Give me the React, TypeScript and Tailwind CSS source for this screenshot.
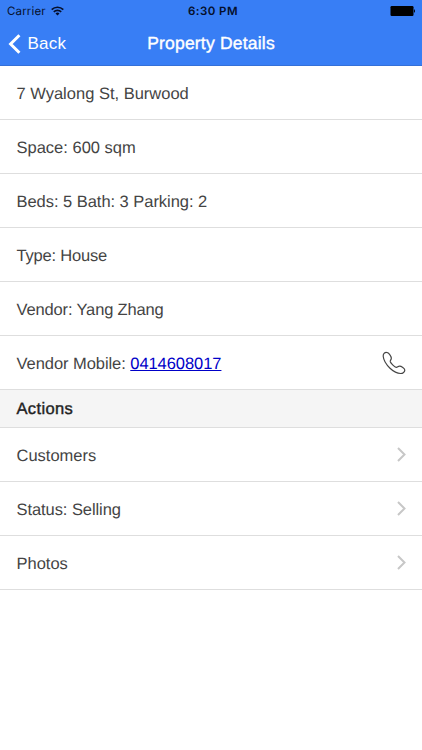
import React from 'react';

interface Property {
  address: string;
  space: number;
  beds: number;
  bath: number;
  parking: number;
  type: string;
  vendor: string;
  mobile: string;
  status: string;
}

const property: Property = {
  address: '7 Wyalong St, Burwood',
  space: 600,
  beds: 5,
  bath: 3,
  parking: 2,
  type: 'House',
  vendor: 'Yang Zhang',
  mobile: '0414608017',
  status: 'Selling',
};

function StatusBar() {
  return (
    <div className="grid h-[22px] grid-cols-3 items-center px-[7px] text-[#050f2b]">
      <div className="flex items-center gap-[5px] font-['Inter',sans-serif] text-[11.5px]">
        <span className="tracking-[0.15px]">Carrier</span>
        <svg width="13" height="10" viewBox="0 0 13 10" fill="none" stroke="currentColor" strokeWidth="1.7">
          <path d="M0.7 3.6a8.3 8.3 0 0 1 11.6 0" />
          <path d="M2.8 5.8a5.3 5.3 0 0 1 7.4 0" />
          <path d="M6.5 9.6 4.5 7.5a2.9 2.9 0 0 1 4 0z" fill="currentColor" stroke="none" />
        </svg>
      </div>
      <div className="pl-[4px] text-center font-['Inter',sans-serif] text-[11.5px] font-semibold tracking-[0.45px]">
        6:30 PM
      </div>
      <svg className="justify-self-end" width="25" height="10" viewBox="0 0 25 10" fill="#000">
        <rect x="0.5" y="0" width="23" height="10" rx="1.2" />
        <path d="M24 3.2c1.3.6 1.3 3 0 3.6z" />
      </svg>
    </div>
  );
}

function NavBar() {
  return (
    <div className="grid h-[43px] grid-cols-[1fr_auto_1fr] items-center text-white">
      <button className="flex items-center pl-[8px] text-[17px] tracking-[0.2px]">
        <svg width="13" height="20" viewBox="0 0 13 20" fill="none" stroke="currentColor" strokeWidth="3">
          <path d="M11.4 1.2 2.6 10l8.8 8.8" />
        </svg>
        <span className="ml-[6.5px]">Back</span>
      </button>
      <h1 className="-mt-[2px] text-[17.5px] tracking-[0.2px] [-webkit-text-stroke:0.4px]">Property Details</h1>
      <span />
    </div>
  );
}

interface RowProps {
  children: React.ReactNode;
  icon?: React.ReactNode;
  className?: string;
}

function Row({ children, icon, className = '' }: RowProps) {
  return (
    <li className="flex h-[54px] items-center justify-between border-b border-[#dedede] pl-[16.5px] pr-4 pt-px">
      <span className={`pt-[2px] ${className}`}>{children}</span>
      {icon}
    </li>
  );
}

function Chevron() {
  return (
    <svg className="-mt-[2px]" width="9" height="15" viewBox="0 0 9 15" fill="none" stroke="#c7c7c7" strokeWidth="2">
      <path d="M1 1l6.5 6.5L1 14" />
    </svg>
  );
}

function Phone() {
  return (
    <svg width="24" height="24" viewBox="0 0 24 24" fill="none" stroke="#444" strokeWidth="1.2" strokeLinejoin="round">
      <path d="M4.6 1.3C2.6 1.2 1 3.1 1.2 5.3c.4 4 3.2 8.500 6.8 11.9 3.5 3.3 7.1 5.3 10.6 5.3 2.3 0 4.3-1.6 4.2-3.5-.1-1.1-1-1.8-2-2.5-1.3-.9-2.5-1.5-3.5-1.3-1.3.2-1.9 1.2-3.1 1.1-1.4-.1-5.4-4-5.9-5.6-.3-1.2.8-1.9 1-3.1.2-1.3-.6-2.7-1.5-4C6.9 2.2 6 1.3 4.6 1.3z" />
    </svg>
  );
}

export default function App() {
  return (
    <div className="min-h-[750px] w-full bg-white font-['Liberation_Sans',Arial,sans-serif] text-[16.5px] leading-[20px] text-[#444] [font-kerning:normal] [text-rendering:geometricPrecision]">
      <header className="h-[66px] border-b border-[#3470d8] bg-[#387ef5]">
        <StatusBar />
        <NavBar />
      </header>

      <ul>
        <Row>{property.address}</Row>
        <Row>Space: {property.space} sqm</Row>
        <Row className="tracking-[-0.04px]">
          Beds: {property.beds} Bath: {property.bath} Parking: {property.parking}
        </Row>
        <Row className="tracking-[-0.2px]">Type: {property.type}</Row>
        <Row className="tracking-[-0.15px]">Vendor: {property.vendor}</Row>
        <Row className="tracking-[-0.06px]" icon={<Phone />}>
          Vendor Mobile:{' '}
          <a href={`tel:${property.mobile}`} className="text-[#0000c8] underline">
            {property.mobile}
          </a>
        </Row>
      </ul>

      <h2 className="flex h-[38px] items-center border-b border-[#dedede] bg-[#f5f5f5] pl-[16.5px] pt-px tracking-[0.35px] text-[#222] [-webkit-text-stroke:0.4px]">
        Actions
      </h2>

      <ul>
        <Row icon={<Chevron />}>Customers</Row>
        <Row className="tracking-[-0.07px]" icon={<Chevron />}>
          Status: {property.status}
        </Row>
        <Row icon={<Chevron />}>Photos</Row>
      </ul>
    </div>
  );
}
